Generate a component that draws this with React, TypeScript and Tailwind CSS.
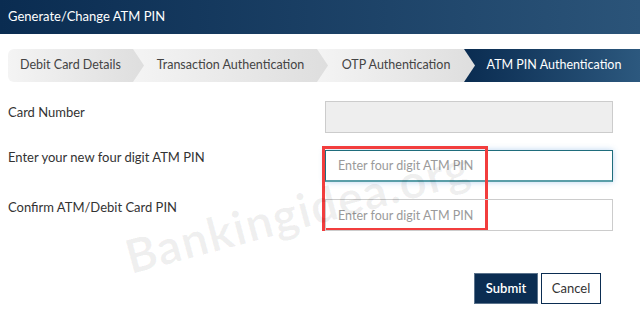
import React from 'react';

const steps = [
  { label: 'Debit Card Details', w: 'w-[136px]' },
  { label: 'Transaction Authentication', w: 'w-[195px]' },
  { label: 'OTP Authentication', w: 'w-[158px]' },
];

const FormRow: React.FC<{ label: string; labelClass: string; children: React.ReactNode }> = ({ label, labelClass, children }) => (
  <div className="flex items-start">
    <div className={`w-[325px] shrink-0 pl-2 text-[13px] leading-5 text-[#333] ${labelClass}`}>{label}</div>
    <div className="relative">{children}</div>
  </div>
);

export default function App() {
  return (
    <div className="relative w-[640px] h-[313px] overflow-hidden bg-white font-['Lato',sans-serif]">
      {/* header */}
      <div className="h-[34px] flex items-center px-2 bg-gradient-to-r from-[#0a2c51] to-[#2b5479] text-white text-[13px]">
        Generate/Change ATM PIN
      </div>

      {/* steps */}
      <div className="flex mt-[15px] ml-2 h-[33px] w-[660px]">
        {steps.map((s, i) => (
          <div
            key={s.label}
            style={{ zIndex: 10 - i }}
            className={`${s.w} ${i === 0 ? 'rounded-l-md pl-0' : '-ml-[11px] pl-[11px]'} relative shrink-0 h-full flex items-center justify-center pr-[11px] bg-gradient-to-r from-[#f4f4f4] to-[#dedede] text-[#444] text-[12.5px] [clip-path:polygon(0_0,calc(100%_-_11px)_0,100%_50%,calc(100%_-_11px)_100%,0_100%)]`}
          >
            {s.label}
          </div>
        ))}
        <div className="-ml-[11px] pl-[11px] pr-[20px] w-[189px] shrink-0 h-full flex items-center justify-center bg-gradient-to-r from-[#0a2c51] to-[#2f5c82] text-white text-[12.5px] [clip-path:polygon(0_0,calc(100%_-_11px)_0,100%_50%,calc(100%_-_11px)_100%,0_100%)]">
          ATM PIN Authentication
        </div>
      </div>

      {/* form */}
      <div className="mt-[19px] flex flex-col gap-[17px]">
        <FormRow label="Card Number" labelClass="pt-px">
          <div className="w-[288px] h-8 border border-[#cccccc] bg-[#eeeeee]" />
        </FormRow>
        <FormRow label="Enter your new four digit ATM PIN" labelClass="-mt-[3px]">
          <input
            placeholder="Enter four digit ATM PIN"
            className="w-[288px] h-8 px-3 border border-[#1f6d7c] border-b-2 border-b-[#5a9ea8] shadow-[0_0_6px_rgba(102,160,220,0.45)] text-[12.5px] placeholder:text-[#9a9a9a] outline-none"
          />
          <div className="absolute -left-[3px] -top-1 w-[166px] h-[85px] border-[3px] border-[#f23d3d] pointer-events-none" />
        </FormRow>
        <FormRow label="Confirm ATM/Debit Card PIN" labelClass="-mt-[2px]">
          <input
            placeholder="Enter four digit ATM PIN"
            className="w-[288px] h-8 px-3 border border-[#cccccc] text-[12.5px] placeholder:text-[#9a9a9a] outline-none"
          />
        </FormRow>
      </div>

      {/* buttons */}
      <div className="mt-[42px] flex justify-end gap-[3px] pr-[39px]">
        <button className="w-16 h-[31px] bg-[#0b2d52] border border-[#5b738c] text-white text-[13px] font-semibold">
          Submit
        </button>
        <button className="w-[60px] h-[31px] bg-white border border-[#0b2d52] text-[#333] text-[13px]">
          Cancel
        </button>
      </div>

      {/* watermark */}
      <div className="absolute left-[120px] top-[176px] -rotate-[15deg] text-[47px] font-bold text-black/[0.06] tracking-wide pointer-events-none whitespace-nowrap">
        Bankingidea.org
      </div>
    </div>
  );
}
